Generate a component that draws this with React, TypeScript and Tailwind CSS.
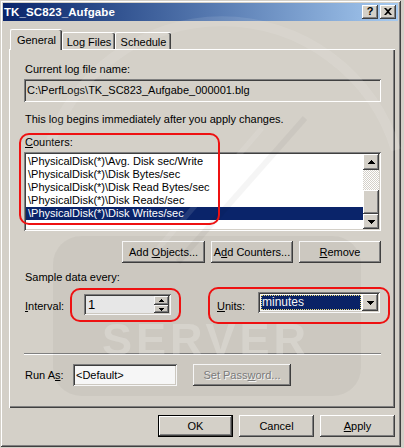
import React from "react";

const raised =
  "shadow-[inset_-1px_-1px_#404040,inset_1px_1px_#ffffff,inset_-2px_-2px_#808080,inset_2px_2px_#d4d0c8]";
const sunken =
  "shadow-[inset_1px_1px_#808080,inset_-1px_-1px_#ffffff,inset_2px_2px_#404040,inset_-2px_-2px_#d4d0c8]";

function Arrow({ dir }: { dir: "up" | "down" }) {
  return (
    <svg width="7" height="4" viewBox="0 0 7 4">
      {dir === "up" ? (
        <path d="M3 0h1v1h1v1h1v1h1v1H0V3h1V2h1V1h1z" fill="#000" />
      ) : (
        <path d="M0 0h7v1H6v1H5v1H4v1H3V3H2V2H1V1H0z" fill="#000" />
      )}
    </svg>
  );
}

function Button({
  children,
  className = "",
  disabled = false,
  isDefault = false,
}: {
  children: React.ReactNode;
  className?: string;
  disabled?: boolean;
  isDefault?: boolean;
}) {
  return (
    <div
      className={`flex items-center justify-center bg-[#d4d0c8] ${
        isDefault ? "border border-black" : ""
      } ${className}`}
    >
      <div
        className={`w-full h-full flex items-center justify-center ${raised} ${
          disabled ? "text-[#808080] [text-shadow:1px_1px_#ffffff]" : ""
        }`}
      >
        {children}
      </div>
    </div>
  );
}

// faint product watermark painted over the dialog
function Watermark() {
  return (
    <svg
      className="absolute left-0 top-0 pointer-events-none"
      width="404"
      height="448"
      viewBox="0 0 404 448"
    >
      <rect x="53" y="236" width="308" height="160" rx="28" fill="#000" opacity="0.035" />
      <path d="M48 150 A182 182 0 0 1 396 150" fill="none" stroke="#fff" strokeWidth="10" opacity="0.1" />
      <path d="M305 118 L178 262" stroke="#000" strokeWidth="6" opacity="0.035" />
      <path d="M262 128 L150 258" stroke="#fff" strokeWidth="5" opacity="0.1" />
      <text
        x="206"
        y="355"
        textAnchor="middle"
        fontFamily="'Liberation Sans', Arial, sans-serif"
        fontWeight="bold"
        fontSize="45"
        letterSpacing="4"
        fill="#fff"
        opacity="0.2"
      >
        SERVER
      </text>
    </svg>
  );
}

const counters = [
  "\\PhysicalDisk(*)\\Avg. Disk sec/Write",
  "\\PhysicalDisk(*)\\Disk Bytes/sec",
  "\\PhysicalDisk(*)\\Disk Read Bytes/sec",
  "\\PhysicalDisk(*)\\Disk Reads/sec",
  "\\PhysicalDisk(*)\\Disk Writes/sec",
];

export default function App() {
  return (
    <div className="relative w-[404px] h-[448px] overflow-hidden bg-[#d4d0c8] text-[11px] leading-[13px] text-black font-['Liberation_Sans',Arial,sans-serif]">
      <div className="relative w-[401px] h-[447px] p-[3px] shadow-[inset_1px_1px_#d4d0c8,inset_-1px_-1px_#404040,inset_2px_2px_#ffffff,inset_-2px_-2px_#808080]">
        {/* caption */}
        <div className="h-[18px] flex items-center justify-between pl-[1px] pr-[2px] bg-gradient-to-r from-[#0a246a] to-[#a6caf0]">
          <span className="text-white font-bold text-[11.5px] tracking-[0.1px]">TK_SC823_Aufgabe</span>
          <div className="flex gap-[2px]">
            <div className={`w-[16px] h-[14px] bg-[#d4d0c8] flex items-center justify-center ${raised}`}>
              <span className="font-bold text-[11px] leading-[11px] -mt-[1px]">?</span>
            </div>
            <div className={`w-[16px] h-[14px] bg-[#d4d0c8] flex items-center justify-center ${raised}`}>
              <svg width="8" height="7" viewBox="0 0 8 7" className="-mt-[1px]">
                <path d="M0 0h2l2 2 2-2h2L5 3.5 8 7H6L4 5 2 7H0l3-3.5z" fill="#000" />
              </svg>
            </div>
          </div>
        </div>

        {/* tabs */}
        <div className="flex items-end ml-[7px] mt-[8px] h-[20px] relative z-10">
          <div className="w-[52px] h-[21px] -mb-[1px] bg-[#d4d0c8] rounded-t-[2px] border-l border-t border-white shadow-[inset_-1px_0_#404040,inset_-2px_0_#808080] flex justify-center pt-[4px]">
            General
          </div>
          <div className="w-[53px] h-[17px] rounded-t-[2px] border-l border-t border-white shadow-[inset_-1px_0_#404040,inset_-2px_0_#808080] flex justify-center pt-[3px]">
            Log Files
          </div>
          <div className="w-[56px] h-[17px] rounded-t-[2px] border-l border-t border-white shadow-[inset_-1px_0_#404040,inset_-2px_0_#808080] flex justify-center pt-[3px]">
            Schedule
          </div>
        </div>

        {/* page */}
        <div className="ml-[6px] w-[386px] h-[359px] px-[15px] pt-[14px] shadow-[inset_1px_1px_#ffffff,inset_-1px_-1px_#404040,inset_-2px_-2px_#808080]">
          <div className="pl-[1px]">Current log file name:</div>
          <div className={`mt-[3px] w-[357px] h-[23px] flex items-center pl-[3px] ${sunken}`}>
            C:\PerfLogs\TK_SC823_Aufgabe_000001.blg
          </div>
          <div className="mt-[11px] pl-[1px]">This log begins immediately after you apply changes.</div>
          <div className="mt-[10px] pl-[1px]">
            <span className="underline">C</span>ounters:
          </div>
          <div className={`mt-[3px] w-[357px] h-[79px] bg-white p-[2px] flex ${sunken}`}>
            <div className="flex-1 pt-[1px]">
              {counters.map((c, i) => (
                <div
                  key={c}
                  className={`h-[13px] pl-[2px] whitespace-nowrap ${
                    i === 4 ? "bg-[#0a246a] text-white" : ""
                  }`}
                >
                  {c}
                </div>
              ))}
            </div>
            <div className="w-[16px] flex flex-col">
              <div className={`h-[16px] bg-[#d4d0c8] flex items-center justify-center ${raised}`}>
                <Arrow dir="up" />
              </div>
              <div className="h-[20px] bg-[repeating-conic-gradient(#d4d0c8_0%_25%,#ffffff_0%_50%)] bg-[length:2px_2px]" />
              <div className={`h-[24px] bg-[#d4d0c8] ${raised}`} />
              <div className={`h-[15px] bg-[#d4d0c8] flex items-center justify-center ${raised}`}>
                <Arrow dir="down" />
              </div>
            </div>
          </div>

          <div className="mt-[10px] flex justify-end gap-[6px] w-[357px]">
            <Button className="w-[83px] h-[22px]">
              <span>
                Add <span className="underline">O</span>bjects...
              </span>
            </Button>
            <Button className="w-[82px] h-[22px]">
              <span>
                A<span className="underline">d</span>d Counters...
              </span>
            </Button>
            <Button className="w-[82px] h-[22px]">
              <span>
                <span className="underline">R</span>emove
              </span>
            </Button>
          </div>

          <div className="mt-[8px] pl-[1px]">Sample data every:</div>

          <div className="mt-[8px] flex h-[23px]">
            <div className="pl-[1px] pt-[8px] w-[60px]">
              <span className="underline">I</span>nterval:
            </div>
            <div className={`mt-[2px] w-[87px] h-[21px] bg-[#f0f0f0] flex p-[2px] ${sunken}`}>
              <div className="flex-1 pl-[2px] pt-[1px] text-[13px] leading-[15px]">1</div>
              <div className="w-[15px] flex flex-col">
                <div className={`h-[9px] bg-[#d4d0c8] flex items-center justify-center ${raised}`}>
                  <svg width="5" height="3" viewBox="0 0 5 3">
                    <path d="M2 0h1v1h1v1h1v1H0V2h1V1h1z" fill="#000" />
                  </svg>
                </div>
                <div className={`h-[8px] bg-[#d4d0c8] flex items-center justify-center ${raised}`}>
                  <svg width="5" height="3" viewBox="0 0 5 3">
                    <path d="M0 0h5v1H4v1H3v1H2V2H1V1H0z" fill="#000" />
                  </svg>
                </div>
              </div>
            </div>
            <div className="ml-[46px] pt-[8px] w-[41px]">
              <span className="underline">U</span>nits:
            </div>
            <div className={`w-[122px] h-[21px] bg-white flex items-center p-[2px] ${sunken}`}>
              <div className="flex-1 h-full p-[1px]">
                <div className="h-full bg-[#0a246a] text-white text-[12px] leading-[14px] pl-[1px] outline-1 outline-dotted outline-[#f4e27a] -outline-offset-1">
                  minutes
                </div>
              </div>
              <div className={`w-[16px] h-[17px] bg-[#d4d0c8] flex items-center justify-center ${raised}`}>
                <Arrow dir="down" />
              </div>
            </div>
          </div>

          <div className="mt-[38px] w-[357px] h-[2px] border-t border-[#808080] border-b border-b-white" />

          <div className="mt-[9px] flex h-[22px] items-center">
            <div className="pl-[1px] w-[49px]">
              Run A<span className="underline">s</span>:
            </div>
            <div className={`w-[104px] h-[22px] bg-white flex items-center pl-[3px] ${sunken}`}>
              &lt;Default&gt;
            </div>
            <Button disabled className="ml-[16px] w-[98px] h-[22px]">
              <span>
                Set Pass<span className="underline">w</span>ord...
              </span>
            </Button>
          </div>
        </div>

        <div className="mt-[7px] ml-[6px] w-[386px] flex justify-end gap-[6px]">
          <Button isDefault className="w-[75px] h-[22px]">
            OK
          </Button>
          <Button className="w-[75px] h-[22px]">Cancel</Button>
          <Button className="w-[75px] h-[22px]">
            <span>
              <span className="underline">A</span>pply
            </span>
          </Button>
        </div>
      </div>

      <Watermark />

      {/* callout marks */}
      <div className="absolute left-[19px] top-[133px] w-[201px] h-[92px] border-2 border-[#ee1111] rounded-[10px] pointer-events-none" />
      <div className="absolute left-[70px] top-[288px] w-[111px] h-[34px] border-2 border-[#ee1111] rounded-[10px] pointer-events-none" />
      <div className="absolute left-[208px] top-[287px] w-[182px] h-[37px] border-2 border-[#ee1111] rounded-[10px] pointer-events-none" />
    </div>
  );
}
